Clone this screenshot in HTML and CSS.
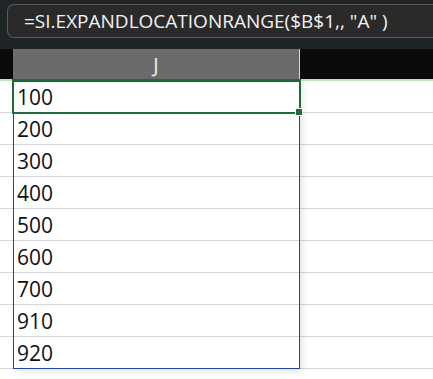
FILE: index.html
```html
<!DOCTYPE html>
<html lang="en">
<head>
  <meta charset="UTF-8">
  <title>Spill range</title>
  <link rel="stylesheet" href="styles.css">
</head>
<body>
  <div class="formula-bar">
    <div class="formula-box">=SI.EXPANDLOCATIONRANGE($B$1,, "A" )</div>
  </div>
  <div class="col-headers">
    <div class="corner"></div>
    <div class="col-j">J</div>
    <div class="col-rest"></div>
  </div>
  <div class="sheet">
    <div class="row"><div class="c-i"></div><div class="c-j">100</div><div class="c-k"></div></div>
    <div class="row"><div class="c-i"></div><div class="c-j">200</div><div class="c-k"></div></div>
    <div class="row"><div class="c-i"></div><div class="c-j">300</div><div class="c-k"></div></div>
    <div class="row"><div class="c-i"></div><div class="c-j">400</div><div class="c-k"></div></div>
    <div class="row"><div class="c-i"></div><div class="c-j">500</div><div class="c-k"></div></div>
    <div class="row"><div class="c-i"></div><div class="c-j">600</div><div class="c-k"></div></div>
    <div class="row"><div class="c-i"></div><div class="c-j">700</div><div class="c-k"></div></div>
    <div class="row"><div class="c-i"></div><div class="c-j">910</div><div class="c-k"></div></div>
    <div class="row"><div class="c-i"></div><div class="c-j">920</div><div class="c-k"></div></div>

    <div class="spill"></div>
    <div class="selection"><span class="handle"></span></div>
  </div>
</body>
</html>
```

FILE: styles.css
```css
body {
  margin: 0;
  font-family: "Open Sans", "Liberation Sans", sans-serif;
  background: #fff;
  overflow: hidden;
}
.formula-bar {
  height: 49px;
  background: #1f2527;
  padding: 4px 0 0 7px;
  box-sizing: border-box;
}
.formula-box {
  height: 34px;
  box-sizing: border-box;
  border: 1px solid #5a5a5a;
  border-right: none;
  border-radius: 7px 0 0 7px;
  background: #2a2a2a;
  color: #f2f2f2;
  font-size: 19px;
  line-height: 33px;
  padding-left: 16px;
  white-space: nowrap;
}
.col-headers {
  display: flex;
  height: 30px;
  background: #0b0b0b;
  border-bottom: 2px solid #c6dfc0;
}
.corner {
  width: 13px;
}
.col-j {
  width: 286px;
  background: #6b6b6b;
  border-right: 1px solid #d8d8d8;
  color: #f2f2f2;
  font-size: 20px;
  line-height: 32px;
  text-align: center;
}
.col-rest {
  flex: 1;
}
.sheet {
  position: relative;
  height: 300px;
}
.row {
  display: flex;
  height: 32px;
  border-bottom: 1px solid #d6d6d6;
  box-sizing: border-box;
}
.c-i {
  width: 13px;
  border-right: 1px solid #d6d6d6;
}
.c-j {
  width: 286px;
  border-right: 1px solid #d6d6d6;
  font-size: 21px;
  line-height: 33px;
  padding-left: 3px;
  color: #111;
  box-sizing: border-box;
}
.c-k {
  flex: 1;
}
.spill {
  position: absolute;
  left: 13px;
  top: 0;
  width: 287px;
  height: 288px;
  border: 1px solid #1f45a0;
  box-sizing: border-box;
  box-shadow: 3px 3px 6px rgba(0, 0, 0, 0.1);
}
.selection {
  position: absolute;
  left: 12px;
  top: -2px;
  width: 289px;
  height: 35px;
  border: 2px solid #1e6b3d;
  box-sizing: border-box;
}
.handle {
  position: absolute;
  right: -4px;
  bottom: -4px;
  width: 6px;
  height: 6px;
  background: #1e6b3d;
  border: 1px solid #fff;
}
```
